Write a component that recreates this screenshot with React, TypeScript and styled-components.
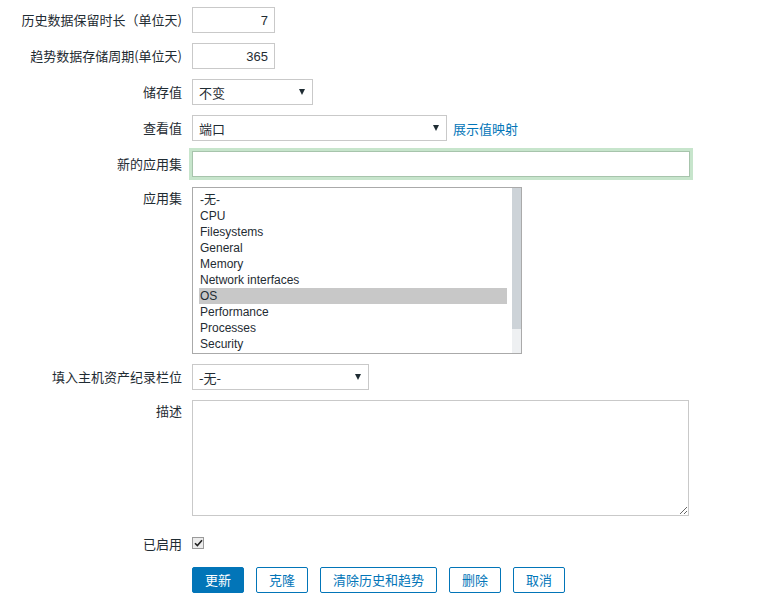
import React from "react";
import styled, { createGlobalStyle } from "styled-components";

const Global = createGlobalStyle`
  html, body { margin: 0; padding: 0; background: #fff; }
  body {
    font-family: "Liberation Sans", "Noto Sans CJK SC", Arial, sans-serif;
    color: #1f2c33;
  }
  * { box-sizing: border-box; }
`;

const Form = styled.form`
  display: flex;
  flex-direction: column;
  gap: 10px;
  padding-top: 7px;
  width: 779px;
`;

const Row = styled.div<{ $top?: boolean; $mt?: number }>`
  display: flex;
  align-items: ${(p) => (p.$top ? "flex-start" : "center")};
  gap: 10px;
  margin-top: ${(p) => p.$mt ?? 0}px;
`;

const Label = styled.label<{ $top?: boolean }>`
  width: 182px;
  flex: none;
  text-align: right;
  font-family: "Noto Sans CJK SC", "Liberation Sans", sans-serif;
  font-size: 13px;
  line-height: 20px;
  color: #1f2c33;
  padding-top: ${(p) => (p.$top ? "1px" : "0")};
  white-space: nowrap;
`;

const TextInput = styled.input<{ $w: number; $right?: boolean }>`
  width: ${(p) => p.$w}px;
  height: 26px;
  border: 1px solid #c9c9c9;
  padding: 0 6px;
  font-family: "Liberation Sans", "Noto Sans CJK SC", sans-serif;
  font-size: 13px;
  color: #1f2c33;
  text-align: ${(p) => (p.$right ? "right" : "left")};
  outline: none;
  background: #fff;
`;

const FocusInput = styled(TextInput)`
  height: 26px;
  border-color: #a7c4ac;
  box-shadow: 0 0 0 3px #c7e5cc;
`;

const SelectBox = styled.div<{ $w: number }>`
  width: ${(p) => p.$w}px;
  height: 26px;
  border: 1px solid #c9c9c9;
  display: flex;
  align-items: center;
  justify-content: space-between;
  padding: 0 7px 0 6px;
  background: #fff;
  font-family: "Noto Sans CJK SC", "Liberation Sans", sans-serif;
  font-size: 13px;
  color: #1f2c33;
`;

const Arrow = styled.span`
  width: 0;
  height: 0;
  border-left: 3.5px solid transparent;
  border-right: 3.5px solid transparent;
  border-top: 6px solid #1f2c33;
`;

const Link = styled.a`
  font-family: "Noto Sans CJK SC", "Liberation Sans", sans-serif;
  font-size: 13px;
  color: #0275b8;
  text-decoration: none;
  margin-left: -4px;
`;

const ListBox = styled.div`
  width: 330px;
  height: 167px;
  border: 1px solid #aaaaaa;
  display: flex;
  overflow: hidden;
  background: #fff;
`;

const Options = styled.div`
  flex: 1;
  padding: 4px 5px 0 6px;
`;

const Option = styled.div<{ $sel?: boolean }>`
  height: 16px;
  line-height: 16px;
  font-size: 12px;
  font-family: "Liberation Sans", "Noto Sans CJK SC", sans-serif;
  color: #1f2c33;
  padding-left: 1px;
  background: ${(p) => (p.$sel ? "#c8c8c8" : "transparent")};
`;

const ScrollTrack = styled.div`
  width: 9px;
  background: #eef0f2;
  display: flex;
  flex-direction: column;
`;

const ScrollThumb = styled.div`
  height: 141px;
  background: #cdd3d8;
`;

const TextArea = styled.textarea`
  width: 497px;
  height: 116px;
  border: 1px solid #c9c9c9;
  font-family: "Liberation Sans", sans-serif;
  font-size: 13px;
  padding: 4px 6px;
  outline: none;
  resize: both;
`;

const CheckWrap = styled.span`
  width: 12px;
  height: 12px;
  border: 1px solid #9a9a9a;
  background: #ececec;
  display: flex;
  align-items: center;
  justify-content: center;
  margin-top: -3px;
`;

const Buttons = styled.div`
  display: flex;
  gap: 12px;
  margin-left: 192px;
  margin-top: 3px;
`;

const Button = styled.button<{ $primary?: boolean }>`
  height: 26px;
  padding: 0 12px;
  border: 1px solid #0275b8;
  border-radius: 2px;
  background: ${(p) => (p.$primary ? "#0275b8" : "#fff")};
  color: ${(p) => (p.$primary ? "#fff" : "#0275b8")};
  font-family: "Noto Sans CJK SC", "Liberation Sans", sans-serif;
  font-size: 13px;
  line-height: 24px;
  cursor: pointer;
`;

const apps = [
  "-无-",
  "CPU",
  "Filesystems",
  "General",
  "Memory",
  "Network interfaces",
  "OS",
  "Performance",
  "Processes",
  "Security",
];

export default function App() {
  return (
    <>
      <Global />
      <Form onSubmit={(e) => e.preventDefault()}>
        <Row>
          <Label>历史数据保留时长（单位天)</Label>
          <TextInput $w={83} $right defaultValue="7" />
        </Row>
        <Row>
          <Label>趋势数据存储周期(单位天)</Label>
          <TextInput $w={83} $right defaultValue="365" />
        </Row>
        <Row>
          <Label>储存值</Label>
          <SelectBox $w={121}>
            <span>不变</span>
            <Arrow />
          </SelectBox>
        </Row>
        <Row>
          <Label>查看值</Label>
          <SelectBox $w={255}>
            <span>端口</span>
            <Arrow />
          </SelectBox>
          <Link href="#">展示值映射</Link>
        </Row>
        <Row>
          <Label>新的应用集</Label>
          <FocusInput $w={498} />
        </Row>
        <Row $top>
          <Label $top>应用集</Label>
          <ListBox>
            <Options>
              {apps.map((a) => (
                <Option key={a} $sel={a === "OS"}>
                  {a}
                </Option>
              ))}
            </Options>
            <ScrollTrack>
              <ScrollThumb />
            </ScrollTrack>
          </ListBox>
        </Row>
        <Row>
          <Label>填入主机资产纪录栏位</Label>
          <SelectBox $w={177}>
            <span>-无-</span>
            <Arrow />
          </SelectBox>
        </Row>
        <Row $top>
          <Label $top>描述</Label>
          <TextArea />
        </Row>
        <Row $mt={8}>
          <Label>已启用</Label>
          <CheckWrap>
            <svg width="9" height="8" viewBox="0 0 9 8">
              <path d="M1 4.2 L3.4 6.6 L8 1.2" fill="none" stroke="#222" strokeWidth="1.6" />
            </svg>
          </CheckWrap>
        </Row>
        <Buttons>
          <Button $primary>更新</Button>
          <Button>克隆</Button>
          <Button>清除历史和趋势</Button>
          <Button>删除</Button>
          <Button>取消</Button>
        </Buttons>
      </Form>
    </>
  );
}
